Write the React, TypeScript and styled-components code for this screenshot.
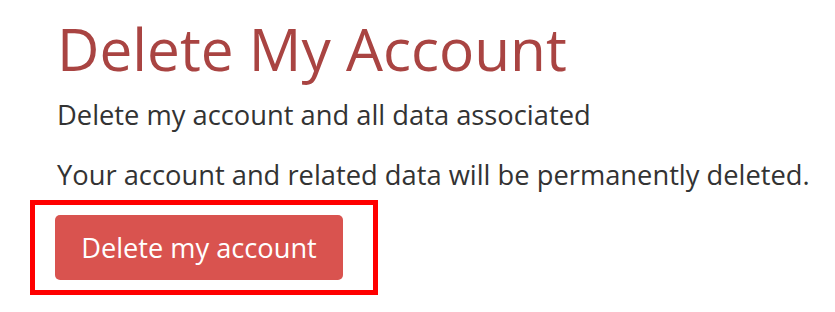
import styled, { createGlobalStyle } from "styled-components";

const GlobalStyle = createGlobalStyle`
  html, body {
    margin: 0;
    padding: 0;
    background: #ffffff;
  }
  body {
    font-family: "Open Sans", "Liberation Sans", sans-serif;
    color: #333333;
  }
`;

const Page = styled.div`
  width: 835px;
  height: 312px;
  padding: 16px 0 0 57px;
  box-sizing: border-box;
  overflow: hidden;
`;

const Title = styled.h1`
  margin: 0 0 16px;
  font-size: 58.5px;
  font-weight: 400;
  line-height: 1.1;
  color: #a94442;
`;

const Text = styled.p`
  margin: 0 0 23px;
  font-size: 27.3px;
  line-height: 37px;
  color: #333333;

  &:last-of-type {
    margin-bottom: 7px;
  }
`;

/* red highlight frame drawn round the button in the screenshot */
const Highlight = styled.div`
  display: inline-block;
  margin-left: -27px;
  padding: 10px 30px 10px 20px;
  border: 5px solid #ff0000;
`;

const DangerButton = styled.button`
  display: block;
  width: 288px;
  height: 65px;
  padding: 14px 0;
  border: none;
  border-radius: 5px;
  background-color: #d9534f;
  color: #ffffff;
  font-family: "Open Sans", "Liberation Sans", sans-serif;
  font-size: 27.2px;
  line-height: 37px;
  cursor: pointer;
`;

export default function App() {
  return (
    <>
      <GlobalStyle />
      <Page>
        <Title>Delete My Account</Title>
        <Text>Delete my account and all data associated</Text>
        <Text>Your account and related data will be permanently deleted.</Text>
        <Highlight>
          <DangerButton>Delete my account</DangerButton>
        </Highlight>
      </Page>
    </>
  );
}
